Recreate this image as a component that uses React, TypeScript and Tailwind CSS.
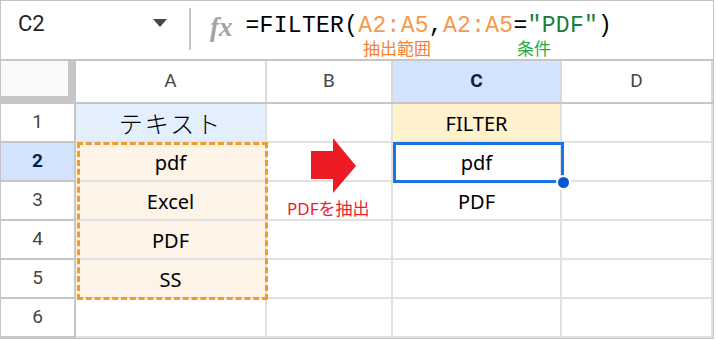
import React from 'react';

const jp = { fontFamily: '"Noto Sans", "Noto Sans CJK JP", sans-serif' };
const roboto = { fontFamily: 'Roboto, "Noto Sans", sans-serif' };

interface ICell {
  w: string;
  bg?: string;
  children?: React.ReactNode;
}

// one data cell of the grid
const Cell: React.FC<ICell> = ({ w, bg = 'bg-white', children }) => (
  <div
    className={`${w} ${bg} h-full shrink-0 border-r-2 border-b-2 border-[#e1e1e1] flex items-center justify-center pt-[3px] text-[20px] text-black`}
    style={jp}
  >
    {children}
  </div>
);

const RowHead: React.FC<{ n: number; active?: boolean }> = ({ n, active }) => (
  <div
    className={`w-[75px] h-full shrink-0 border-r-2 border-b-2 border-[#c6c6c6] flex items-center justify-center text-[19px] ${
      active ? 'bg-[#d3e3fd] font-bold text-[#041e49]' : 'bg-white text-[#444746]'
    }`}
    style={roboto}
  >
    {n}
  </div>
);

const rows: { a?: string; c?: string }[] = [
  { a: 'テキスト', c: 'FILTER' },
  { a: 'pdf', c: 'pdf' },
  { a: 'Excel', c: 'PDF' },
  { a: 'PDF' },
  { a: 'SS' },
  {},
];

export default function App() {
  return (
    <div className="w-[716px] h-[340px] bg-white">
      <div className="w-[714px] h-[339px] border border-[#c4c4c4] flex flex-col">
        {/* formula bar */}
        <div className="h-[60px] shrink-0 border-b-2 border-[#c6c6c6] flex items-start relative">
          <div className="w-[188px] flex items-start justify-between pl-[17px] pr-[22px] pt-[12px]">
            <span className="text-[22px] leading-none text-[#1f1f1f]" style={roboto}>C2</span>
            <svg className="mt-[6px]" width="14" height="8" viewBox="0 0 14 8">
              <path d="M0 0h14L7 8z" fill="#444746" />
            </svg>
          </div>
          <div className="w-[2px] h-[42px] mt-[7px] bg-[#c6c6c6]" />
          <span
            className="ml-[19px] mt-[13px] text-[27px] italic font-bold text-[#a3a3a3] leading-none"
            style={{ fontFamily: '"Liberation Serif", serif' }}
          >
            fx
          </span>
          <div
            className="ml-[13px] mt-[14px] h-[22px] text-[23px] tracking-[0.3px] leading-[22px] text-black whitespace-pre"
            style={{ fontFamily: '"Liberation Mono", monospace' }}
          >
            =FILTER(<span className="text-[#f49a4f]">A2:A5</span>,
            <span className="text-[#f49a4f]">A2:A5</span>=<span className="text-[#188038]">"PDF"</span>)
          </div>
          <span
            className="absolute left-[362px] top-[39px] text-[17px] text-[#f6812f] leading-none"
            style={jp}
          >
            抽出範囲
          </span>
          <span
            className="absolute left-[516px] top-[39px] text-[17px] text-[#28a745] leading-none"
            style={jp}
          >
            条件
          </span>
        </div>

        {/* column headers */}
        <div className="h-[43px] shrink-0 flex border-b-2 border-[#c6c6c6]">
          <div className="w-[75px] h-full shrink-0 bg-[#c6c6c6] flex flex-col">
            <div className="w-[67px] h-[35px] bg-[#f8f9fa]" />
          </div>
          {['A', 'B', 'C', 'D'].map((c, i) => (
            <div
              key={c}
              className={`${['w-[191px]', 'w-[126px]', 'w-[169px]', 'w-[151px]'][i]} h-full shrink-0 border-r-2 border-[#d9d9d9] flex items-center justify-center text-[19px] ${
                c === 'C' ? 'bg-[#d3e3fd] font-bold text-[#041e49]' : 'bg-white text-[#444746]'
              }`}
              style={roboto}
            >
              {c}
            </div>
          ))}
        </div>

        {/* grid */}
        <div className="relative flex flex-col">
          {rows.map((r, i) => (
            <div key={i} className="h-[39px] shrink-0 flex">
              <RowHead n={i + 1} active={i === 1} />
              <Cell
                w="w-[191px]"
                bg={i === 0 ? 'bg-[#e3effc]' : i <= 4 ? 'bg-[#fdf3e6]' : 'bg-white'}
              >
                {i === 0 ? (
                  <span
                    className="text-[24px] tracking-[2px] font-light -mt-[3px]"
                    style={{ fontFamily: '"Noto Sans CJK JP", sans-serif' }}
                  >
                    {r.a}
                  </span>
                ) : (
                  r.a
                )}
              </Cell>
              <Cell w="w-[126px]" />
              <Cell w="w-[169px]" bg={i === 0 ? 'bg-[#fff2cc]' : 'bg-white'}>
                {r.c}
              </Cell>
              <Cell w="w-[151px]" />
            </div>
          ))}

          {/* copy range marker */}
          <div className="absolute left-[76px] top-[38px] w-[191px] h-[158px] border-[3px] border-dashed border-[#f39a2c]" />

          {/* arrow + label */}
          <svg className="absolute left-[310px] top-[34px]" width="46" height="56" viewBox="0 0 46 56">
            <polygon points="0,13 22,13 22,0 45,28 22,55 22,41 0,41" fill="#ed1c24" />
          </svg>
          <span
            className="absolute left-[286px] top-[96px] text-[17px] text-[#ec1c2c] leading-none"
            style={jp}
          >
            PDFを抽出
          </span>

          {/* selected cell C2 */}
          <div className="absolute left-[392px] top-[38px] w-[171px] h-[41px] border-[3px] border-[#1a73e8]" />
          <div className="absolute left-[555px] top-[71px] w-[15px] h-[15px] rounded-full bg-[#0b57d0] border-2 border-white" />
        </div>
      </div>
    </div>
  );
}
